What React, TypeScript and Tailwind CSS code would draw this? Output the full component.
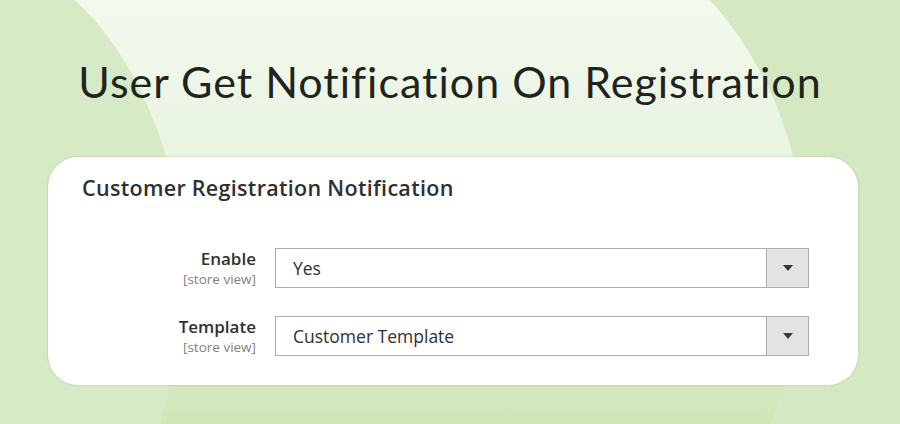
export default function App() {
  return (
    <div className="relative w-[900px] h-[424px] overflow-hidden bg-gradient-to-b from-[#f3f9ee] via-[#e6f2dc] to-[#cfe6b9]">
      <svg className="absolute inset-0" width="900" height="424" viewBox="0 0 900 424">
        <path d="M0,0 H75 C160,80 215,240 160,424 H0 Z" fill="#d6eac6" />
        <path d="M710,0 C800,100 840,260 770,424 H900 V0 Z" fill="#d4e9c2" />
      </svg>

      <div className="relative flex flex-col items-center">
        <h1 className="mt-[56px] h-[52px] text-[43px] leading-[52px] font-normal text-[#1f2420] tracking-[1px] font-['Lato',sans-serif]">
          User Get Notification On Registration
        </h1>

        <div className="mt-[49px] ml-[6px] w-[810px] h-[228px] rounded-[30px] bg-white shadow-[0_0_2px_rgba(120,150,100,0.5)] px-[34px] pt-[17px] font-['Open_Sans',sans-serif]">
          <h2 className="text-[21.5px] leading-[28px] font-semibold text-[#303030] tracking-[0.3px]">
            Customer Registration Notification
          </h2>

          <div className="mt-[46px] flex flex-col gap-[28px]">
            <Row label="Enable" value="Yes" />
            <Row label="Template" value="Customer Template" />
          </div>
        </div>
      </div>
    </div>
  )
}

function Row({ label, value }: { label: string; value: string }) {
  return (
    <div className="flex items-start">
      <div className="w-[174px] text-right flex flex-col gap-[1px]">
        <div className="text-[17px] leading-[22px] font-semibold text-[#303030]">{label}</div>
        <div className="text-[13.5px] leading-[16px] text-[#808080]">[store view]</div>
      </div>
      <div className="ml-[19px] w-[534px] h-[40px] flex border border-[#adadad] bg-white">
        <div className="flex-1 flex items-center pl-[17px] text-[17.5px] text-[#303030]">{value}</div>
        <div className="w-[42px] flex items-center justify-center bg-[#e3e3e3] border-l border-[#adadad]">
          <svg width="10" height="6" viewBox="0 0 10 6">
            <path d="M0,0 H10 L5,6 Z" fill="#41362f" />
          </svg>
        </div>
      </div>
    </div>
  )
}
